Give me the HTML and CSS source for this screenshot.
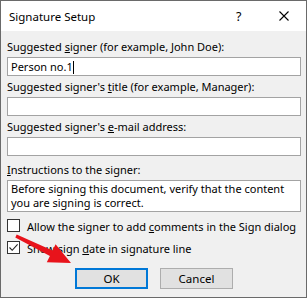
FILE: index.html
```html
<!DOCTYPE html>
<html lang="en">
<head>
    <meta charset="UTF-8">
    <title>Signature Setup</title>
    <link rel="stylesheet" href="styles.css">
</head>
<body>
    <div class="dialog">
        <div class="titlebar">
            <span class="title">Signature Setup</span>
            <span class="help">?</span>
            <span class="close">
                <svg width="10" height="10" viewBox="0 0 10 10"><path d="M0.5 0.5 L9.5 9.5 M9.5 0.5 L0.5 9.5" stroke="#000" stroke-width="1.1" fill="none"/></svg>
            </span>
        </div>
        <div class="content">
            <div class="field">
                <label>Suggested <u>s</u>igner (for example, John Doe):</label>
                <div class="box">Person no.1<span class="caret"></span></div>
            </div>
            <div class="field">
                <label>Suggested signer's <u>t</u>itle (for example, Manager):</label>
                <div class="box"></div>
            </div>
            <div class="field">
                <label>Suggested signer's <u>e</u>-mail address:</label>
                <div class="box"></div>
            </div>
            <div class="field field-notes">
                <label><u>I</u>nstructions to the signer:</label>
                <div class="box notes">Before signing this document, verify that the content you are signing is correct.</div>
            </div>
            <div class="checks">
                <div class="check">
                    <span class="checkbox"></span>
                    <span>Allow the signer to add <u>c</u>omments in the Sign dialog</span>
                </div>
                <div class="check">
                    <span class="checkbox">
                        <svg width="11" height="11" viewBox="0 0 11 11"><path d="M1.5 5.5 L4.2 8.3 L9.6 2.4" stroke="#222" stroke-width="1.1" fill="none"/></svg>
                    </span>
                    <span>Show sign <u>d</u>ate in signature line</span>
                </div>
            </div>
            <div class="buttons">
                <button class="btn default">OK</button>
                <button class="btn">Cancel</button>
            </div>
        </div>
        <!-- red pointer drawn over the dialog -->
        <svg class="arrow" width="307" height="298" viewBox="0 0 307 298">
            <polygon points="15.3,237.4 16.7,234.6 52.5,250.6 55.6,244.3 71,263 46.8,262.3 49.9,256 " fill="#e8131b"/>
        </svg>
    </div>
</body>
</html>
```
FILE: styles.css
```css
body {
    margin: 0;
    font-family: "Noto Sans", "DejaVu Sans", sans-serif;
    font-size: 11px;
    color: #000;
}

.dialog {
    position: relative;
    width: 307px;
    height: 298px;
    box-sizing: border-box;
    border: 1px solid #6a6a6a;
    background-color: #f0f0f0;
    overflow: hidden;
}

.titlebar {
    height: 30px;
    background-color: #fff;
    display: flex;
    align-items: center;
    padding-left: 8px;
}
.title {
    flex: 1;
    font-size: 11.5px;
}
.help {
    width: 12px;
    margin-right: 31px;
    font-size: 12.5px;
}
.close {
    display: flex;
    margin-right: 17px;
}

.content {
    padding: 8px 5px 0 6px;
}

.field {
    display: flex;
    flex-direction: column;
    margin-bottom: 3px;
}
.field label {
    line-height: 16px;
    height: 16px;
    margin-bottom: 2px;
    white-space: nowrap;
}
.field-notes {
    margin-top: 6px;
}
.box {
    height: 19px;
    box-sizing: border-box;
    background-color: #fff;
    border: 1px solid #a3a3a3;
    padding: 0 3px;
    line-height: 17px;
    white-space: nowrap;
}
.caret {
    display: inline-block;
    width: 1px;
    height: 13px;
    background-color: #000;
    vertical-align: -3px;
}
.notes {
    height: 32px;
    line-height: 14px;
    padding: 1px 3px;
    white-space: normal;
}

.checks {
    margin-top: 3px;
}
.check {
    display: flex;
    align-items: center;
    height: 22px;
    gap: 7px;
    white-space: nowrap;
}
.checkbox {
    flex: none;
    align-self: flex-start;
    margin-top: 4px;
    width: 13px;
    height: 13px;
    box-sizing: border-box;
    border: 1px solid #333;
    background-color: #fff;
    display: flex;
    align-items: center;
    justify-content: center;
}

.buttons {
    display: flex;
    justify-content: center;
    gap: 12px;
    margin-top: 9px;
}
.btn {
    width: 73px;
    height: 21px;
    box-sizing: border-box;
    font-family: inherit;
    font-size: 11.5px;
    background-color: #e1e1e1;
    border: 1px solid #adadad;
    padding: 0;
}
.btn.default {
    border: 2px solid #0078d7;
}

.arrow {
    position: absolute;
    left: -1px;
    top: -1px;
}
```
